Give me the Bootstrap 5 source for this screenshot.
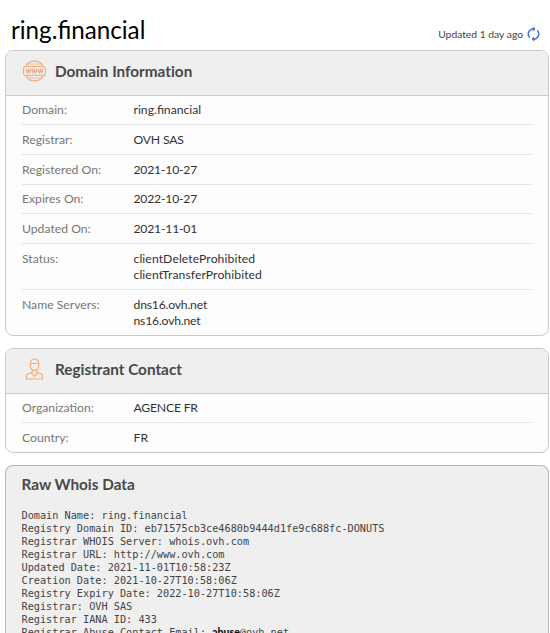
<!DOCTYPE html>
<html lang="en">
<head>
<meta charset="utf-8">
<title>ring.financial whois</title>
<link href="https://cdn.jsdelivr.net/npm/bootstrap@5.3.0/dist/css/bootstrap.min.css" rel="stylesheet">
<style>
html{overflow:hidden}
body{font-family:Lato,"Liberation Sans",sans-serif;font-size:12.2px;line-height:16.25px;color:#333;background:#fff;height:633px;overflow:hidden}
.page{padding:0 1px 0 5px}
.top{height:50px;padding:12px 9px 0 6px}
.domain{font-size:24.2px;line-height:35px;font-weight:400;color:#000}
.updated{font-size:10.3px;color:#444;padding-top:14px}
.panel{border:1px solid #cbcbcb;border-radius:8px;background:#fdfdfd;overflow:hidden;margin-bottom:12px}
.panel-head{height:45px;background:#efefef;border-bottom:1px solid #cbcbcb;padding:0 16px 4px}
.panel-head h2,.raw h2{font-size:15.3px;line-height:20px;font-weight:700;color:#484848;font-variant-ligatures:none}
.icon-box{width:33px}
.rows{padding:0 16px}
.item{padding:6.75px 0 5.75px;border-bottom:1px solid #e4e4e4}
.item:first-child{padding-top:6px}
.item:last-child{border-bottom:0}
.key{width:111.5px;color:#777}
.date{letter-spacing:-.2px}
.status{letter-spacing:.08px}
.raw{background:#efefef;border-color:#b8b8b8;border-bottom:0;border-radius:8px 8px 0 0;height:168px;margin-bottom:0;padding:8px 16px 0 15.5px}
.raw pre{font-family:"DejaVu Sans Mono","Liberation Mono",monospace;font-size:10.22px;line-height:13px;color:#444;margin:15px 0 0;overflow:hidden}
.mail{font:900 10.5px/1 Lato,sans-serif;color:#111}
</style>
</head>
<body>
<main class="page">
  <header class="top d-flex justify-content-between">
    <h1 class="domain mb-0">ring.financial</h1>
    <div class="updated d-flex">
      <span>Updated 1 day ago</span>
      <svg class="ms-1" width="13" height="16" viewBox="0 0 13 16" fill="none" stroke="#3b71cf" stroke-width="1.4"><path d="M2.800 11.800A5.200 5.200 0 0 1 6.500 2.900M10.200 4.200A5.200 5.200 0 0 1 6.500 13.100"/><path d="M5.800 .4 8.500 2.900 5.800 5.400ZM7.200 10.600 4.500 13.100 7.200 15.600Z" fill="#3b71cf" stroke="none"/></svg>
    </div>
  </header>

  <section class="panel">
    <div class="panel-head d-flex align-items-center">
      <div class="icon-box d-flex"><svg width="25" height="22" viewBox="0 0 25 22" fill="none" stroke="#f5ad7b" stroke-width="1.2"><path d="M3.600 6.500A10 10 0 0 1 21.400 6.500M3.600 15.500A10 10 0 0 0 21.400 15.500"/><path d="M6 4H19M6 18H19" stroke-width=".8"/><rect x="1.500" y="6.500" width="22" height="9" rx="2.500"/><path d="M4 9l1.200 4 1.300-3.500L7.800 13 9 9M10 9l1.200 4 1.300-3.500 1.300 3.500L15 9M16 9l1.200 4 1.300-3.500 1.300 3.500L21 9"/></svg></div>
      <h2 class="mb-0">Domain Information</h2>
    </div>
    <div class="rows">
      <div class="item d-flex"><div class="key">Domain:</div><div>ring.financial</div></div>
      <div class="item d-flex"><div class="key">Registrar:</div><div class="date">OVH SAS</div></div>
      <div class="item d-flex"><div class="key">Registered On:</div><div class="date">2021-10-27</div></div>
      <div class="item d-flex"><div class="key">Expires On:</div><div class="date">2022-10-27</div></div>
      <div class="item d-flex"><div class="key">Updated On:</div><div class="date">2021-11-01</div></div>
      <div class="item d-flex"><div class="key">Status:</div><div class="status">clientDeleteProhibited<br>clientTransferProhibited</div></div>
      <div class="item d-flex"><div class="key">Name Servers:</div><div class="date">dns16.ovh.net<br>ns16.ovh.net</div></div>
    </div>
  </section>

  <section class="panel">
    <div class="panel-head d-flex align-items-center">
      <div class="icon-box d-flex"><svg width="25" height="22" viewBox="0 0 25 22" fill="none" stroke="#f5ad7b" stroke-width="1.200"><path d="M8.300 5.500C8.300 2.500 10 1 12.500 1S16.700 2.500 16.700 5.500V7.500C16.700 10.500 14.800 12.500 12.500 12.500S8.300 10.500 8.300 7.500ZM8.300 5.500H16.700M10.300 12V14.200L5.500 16Q4.600 16.500 4.600 18V21H20.400V18Q20.400 16.500 19.500 16L14.700 14.200V12M9 14.800 12.500 18.500 16 14.800"/></svg></div>
      <h2 class="mb-0">Registrant Contact</h2>
    </div>
    <div class="rows">
      <div class="item d-flex"><div class="key">Organization:</div><div class="date">AGENCE FR</div></div>
      <div class="item d-flex"><div class="key">Country:</div><div>FR</div></div>
    </div>
  </section>

  <section class="panel raw">
    <h2 class="mb-0">Raw Whois Data</h2>
<pre>Domain Name: ring.financial
Registry Domain ID: eb71575cb3ce4680b9444d1fe9c688fc-DONUTS
Registrar WHOIS Server: whois.ovh.com
Registrar URL: http://www.ovh.com
Updated Date: 2021-11-01T10:58:23Z
Creation Date: 2021-10-27T10:58:06Z
Registry Expiry Date: 2022-10-27T10:58:06Z
Registrar: OVH SAS
Registrar IANA ID: 433
Registrar Abuse Contact Email: <span class="mail">abuse</span>@ovh.net</pre>
  </section>
</main>
<script src="https://cdn.jsdelivr.net/npm/bootstrap@5.3.0/dist/js/bootstrap.bundle.min.js"></script>
</body>
</html>
